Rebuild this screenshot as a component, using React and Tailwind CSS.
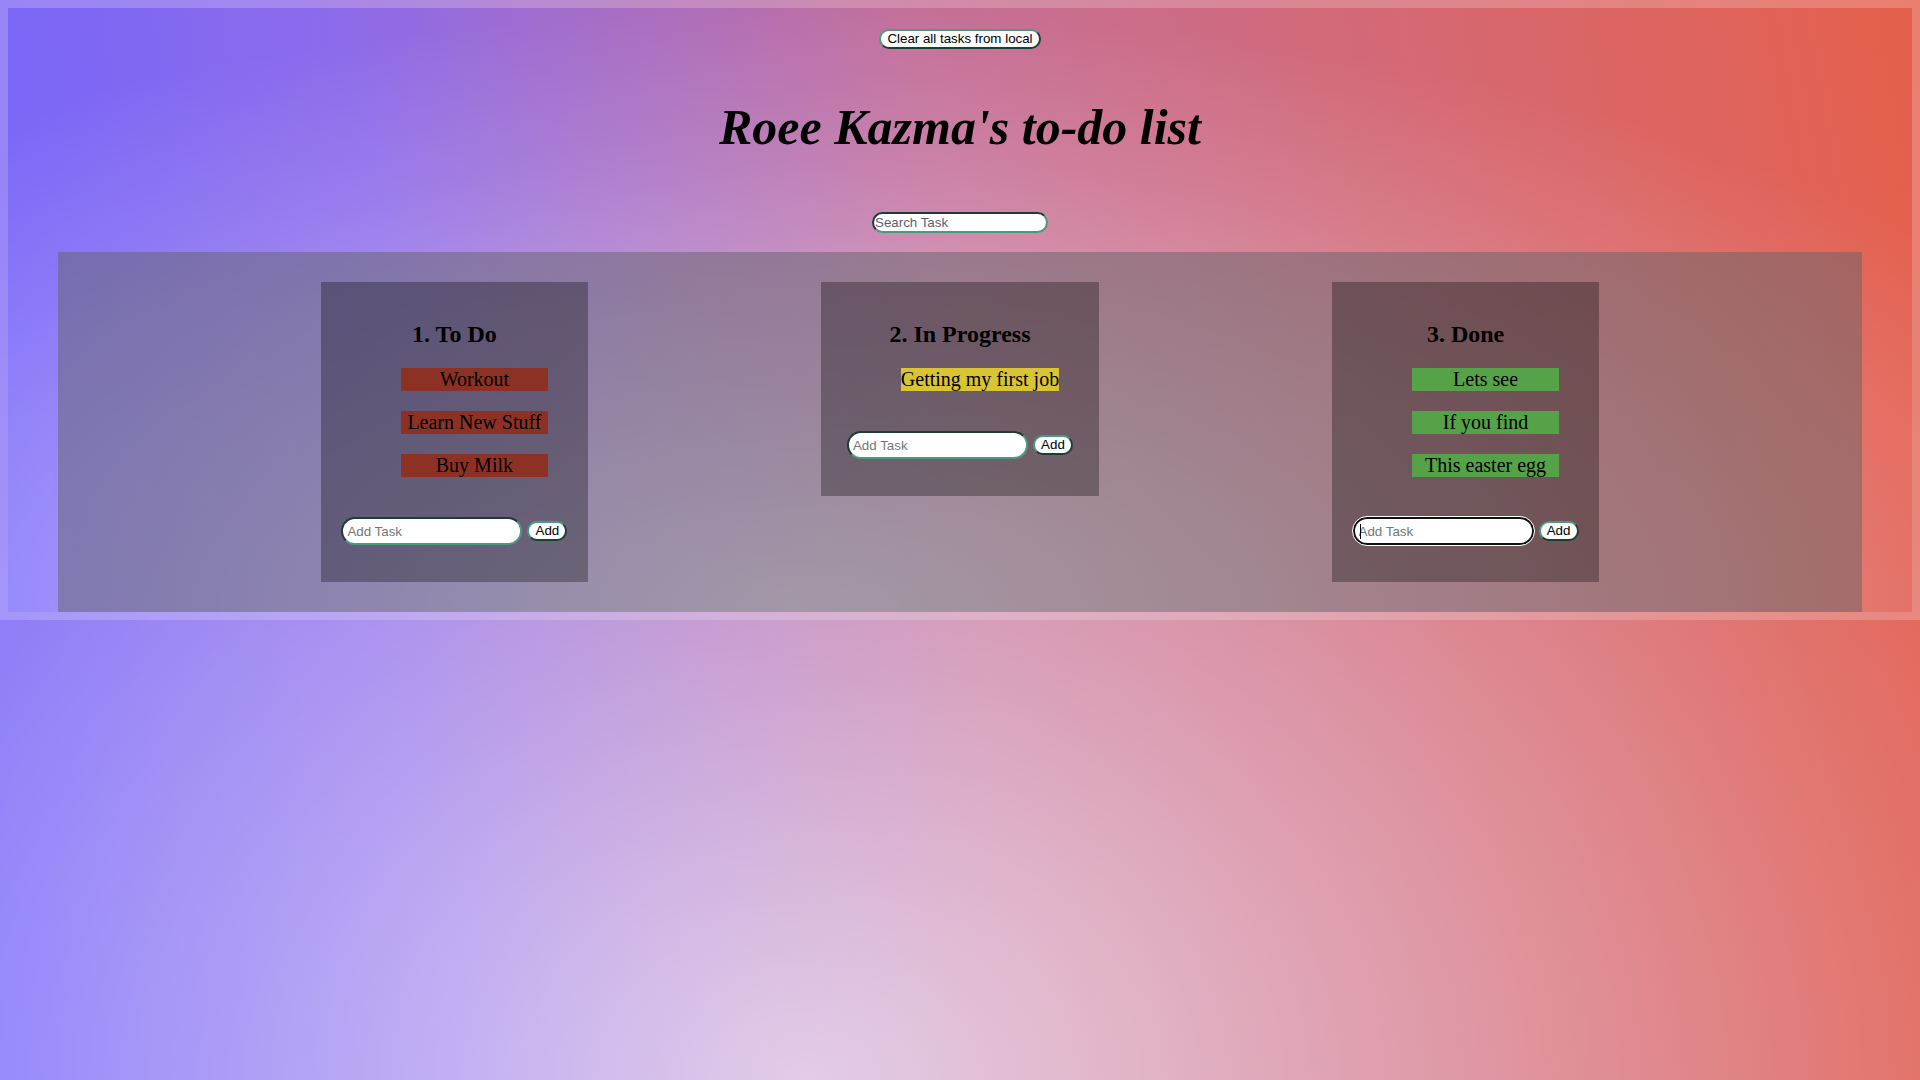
import React from 'react';

// same gradient is used for the page and for the framed app box
const pageBg =
  "[background-image:radial-gradient(75%_100%_at_42%_100%,rgba(255,255,255,0.65),rgba(255,255,255,0.35)_40%,rgba(255,255,255,0.12)_75%,rgba(255,255,255,0)_100%),linear-gradient(80deg,#7565fa,#8d6bea_22%,#c4709a_50%,#e5604c)]";

const inset = 'border-2 border-t-[#1f3d35] border-l-[#1f3d35] border-b-[#4b9a80] border-r-[#4b9a80]';
const outset = 'border-2 border-t-[#4b9a80] border-l-[#4b9a80] border-b-[#1f3d35] border-r-[#1f3d35]';

const columns = [
  { title: '1. To Do', color: 'bg-[#8d3125]', tasks: ['Workout', 'Learn New Stuff', 'Buy Milk'] },
  { title: '2. In Progress', color: 'bg-[#d9c533]', tasks: ['Getting my first job'] },
  { title: '3. Done', color: 'bg-[#56a248]', tasks: ['Lets see', 'If you find', 'This easter egg'], focused: true },
];

const Column = ({ title, color, tasks, focused }) => {
  return (
    <div className="flex flex-col items-center bg-black/30 px-5 pt-[38px] pb-[37px]">
      <h2 className="text-[24px] leading-[28px] font-bold text-black">{title}</h2>
      <ul className="mt-5 pl-10 flex flex-col items-center gap-5">
        {tasks.map((t) => (
          <li key={t} className={`mx-5 min-w-[147px] h-[23px] text-center text-[20px] leading-[23px] text-black whitespace-nowrap ${color}`}>
            {t}
          </li>
        ))}
      </ul>
      <div className="mt-10 flex items-center gap-[5px] font-['Liberation_Sans',Arial,sans-serif] text-[13.33px]">
        {focused ? (
          <span className="relative flex">
            <input
              placeholder="Add Task"
              className="w-[181px] h-[28px] pl-1 rounded-full bg-white border-2 border-[#101010] outline-solid outline-1 outline-white text-black placeholder:text-[#757575]"
            />
            <span className="absolute left-[7px] top-[7px] w-px h-[15px] bg-black" />
          </span>
        ) : (
          <input
            placeholder="Add Task"
            className={`w-[181px] h-[28px] pl-1 rounded-full bg-white text-black placeholder:text-[#757575] outline-none ${inset}`}
          />
        )}
        <button className={`w-[40px] h-[20px] rounded-full bg-white text-black leading-none flex items-center justify-center ${outset}`}>
          Add
        </button>
      </div>
    </div>
  );
};

export default function App() {
  return (
    <div className={`min-h-screen w-full font-['Liberation_Serif','Times_New_Roman',serif] ${pageBg}`}>
      <div className={`border-8 border-white/20 bg-clip-padding flex flex-col items-center ${pageBg}`}>
        <button
          className={`mt-[21px] h-[20px] px-[6px] rounded-full bg-white text-black text-[13.33px] leading-none font-['Liberation_Sans',Arial,sans-serif] ${outset}`}
        >
          Clear all tasks from local
        </button>

        <h1 className="mt-[51px] text-[50px] leading-[55px] font-bold italic text-black">Roee Kazma's to-do list</h1>

        <input
          placeholder="Search Task"
          className={`mt-[57px] w-[176px] h-[21px] px-px rounded-full bg-white text-black text-[13.33px] font-['Liberation_Sans',Arial,sans-serif] placeholder:text-[#5d5d73] outline-none ${inset}`}
        />

        <div className="mt-[19px] self-stretch mx-[50px] p-[30px] bg-[rgba(100,100,105,0.5)] flex justify-evenly items-start">
          {columns.map((c) => (
            <Column key={c.title} {...c} />
          ))}
        </div>
      </div>
    </div>
  );
}
